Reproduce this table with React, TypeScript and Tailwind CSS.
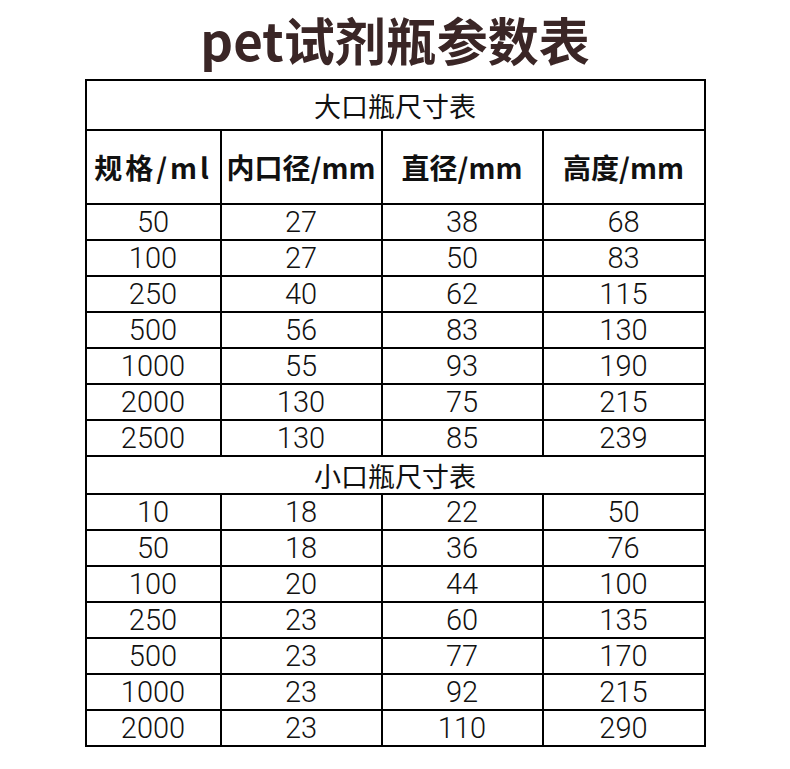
const big = [
  ["50", "27", "38", "68"],
  ["100", "27", "50", "83"],
  ["250", "40", "62", "115"],
  ["500", "56", "83", "130"],
  ["1000", "55", "93", "190"],
  ["2000", "130", "75", "215"],
  ["2500", "130", "85", "239"],
];

const small = [
  ["10", "18", "22", "50"],
  ["50", "18", "36", "76"],
  ["100", "20", "44", "100"],
  ["250", "23", "60", "135"],
  ["500", "23", "77", "170"],
  ["1000", "23", "92", "215"],
  ["2000", "23", "110", "290"],
];

const font = { fontFamily: '"Noto Sans CJK SC", "Noto Sans", sans-serif' };
const digits = { fontFamily: 'Roboto, "Noto Sans", sans-serif' };

function DataRows({ rows }: { rows: string[][] }) {
  return (
    <>
      {rows.map((r, i) => (
        <tr key={i} className="h-[36px]">
          {r.map((c, j) => (
            <td
              key={j}
              className="border-2 border-black p-0 pt-[1px] text-center text-[29px] leading-none font-light text-[#111]"
              style={digits}
            >
              {c}
            </td>
          ))}
        </tr>
      ))}
    </>
  );
}

export default function App() {
  return (
    <div className="min-h-screen bg-white" style={font}>
      <h1 className="pt-[14px] text-center text-[51px] leading-none font-bold text-[#3a2626]">
        pet试剂瓶参数表
      </h1>

      <table className="mx-auto mt-[14px] w-[619px] table-fixed border-collapse border-2 border-black">
        <colgroup>
          <col className="w-[135px]" />
          <col className="w-[161px]" />
          <col className="w-[161px]" />
          <col className="w-[162px]" />
        </colgroup>
        <tbody>
          <tr className="h-[50px]">
            <td colSpan={4} className="border-2 border-black p-0 text-center text-[27px] leading-none text-[#111]">
              大口瓶尺寸表
            </td>
          </tr>
          <tr className="h-[74px]">
            <td className="border-2 border-black p-0 text-center text-[28px] leading-none font-semibold tracking-[3px] text-[#111] whitespace-nowrap">
              规格/ml
            </td>
            <td className="border-2 border-black p-0 text-center text-[28px] leading-none font-semibold text-[#111] whitespace-nowrap">
              内口径/mm
            </td>
            <td className="border-2 border-black p-0 text-center text-[28px] leading-none font-semibold text-[#111] whitespace-nowrap">
              直径/mm
            </td>
            <td className="border-2 border-black p-0 text-center text-[28px] leading-none font-semibold text-[#111] whitespace-nowrap">
              高度/mm
            </td>
          </tr>
          <DataRows rows={big} />
          <tr className="h-[38px]">
            <td colSpan={4} className="border-2 border-black p-0 text-center text-[27px] leading-none text-[#111]">
              小口瓶尺寸表
            </td>
          </tr>
          <DataRows rows={small} />
        </tbody>
      </table>
    </div>
  );
}
